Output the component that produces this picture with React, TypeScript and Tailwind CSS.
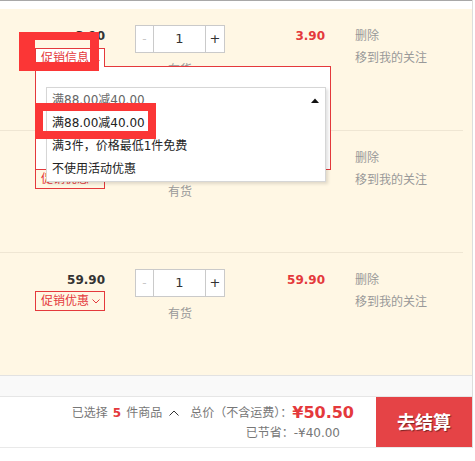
import React from "react";

function ChevronDown({ up = false }: { up?: boolean }) {
  return (
    <svg width="8" height="5" viewBox="0 0 8 5" className="shrink-0">
      {up ? (
        <polyline points="0.5,4.5 4,1 7.5,4.5" fill="none" stroke="#e4393c" strokeWidth="1" />
      ) : (
        <polyline points="0.5,0.5 4,4 7.5,0.5" fill="none" stroke="#e4393c" strokeWidth="1" />
      )}
    </svg>
  );
}

function Qty() {
  return (
    <div className="flex h-[28px] w-[90px] border border-[#cacaca] bg-white">
      <div className="flex w-[18px] items-center justify-center border-r border-[#cacaca] text-[12px] text-[#c8c8c8]">-</div>
      <div className="flex flex-1 items-center justify-center border-r border-[#cacaca] text-[13px] text-[#333]">1</div>
      <div className="flex w-[18px] items-center justify-center text-[13px] text-[#333]">+</div>
    </div>
  );
}

function PromoClosed() {
  return (
    <div className="mt-px flex h-5 w-[70px] items-center border border-[#e4393c] pl-[5px] pr-[3px] text-[12px] text-[#e4393c]">
      <span className="leading-none">促销优惠</span>
      <span className="ml-auto mr-[1px]">
        <ChevronDown />
      </span>
    </div>
  );
}

function PromoOpen() {
  return (
    <div className="relative mt-[2px] h-5 w-[70px]">
      <div className="absolute left-0 top-[18px] z-20 h-[104px] w-[296px] border border-[#e4393c] bg-white">
        <div className="absolute left-[10px] top-[20px] h-[95px] w-[280px] border border-[#d6d6d6] bg-white shadow-[2px_2px_3px_rgba(0,0,0,0.12)]">
          <div className="flex h-6 items-center pl-[5px] pr-[5px] text-[12px] text-[#666]">
            <span>满88.00减40.00</span>
            <svg width="8" height="5" viewBox="0 0 8 5" className="ml-auto mr-[1px]">
              <polygon points="0,5 4,0.5 8,5" fill="#111" />
            </svg>
          </div>
          <div className="h-[23px] pl-[5px] text-[12px] leading-[23px] text-[#222]">满88.00减40.00</div>
          <div className="h-[23px] pl-[5px] text-[12px] leading-[23px] text-[#222]">满3件，价格最低1件免费</div>
          <div className="h-[23px] pl-[5px] text-[12px] leading-[23px] text-[#222]">不使用活动优惠</div>
        </div>
      </div>
      <div className="relative z-30 flex h-[19px] w-[70px] items-center border-l border-r border-t border-[#e4393c] bg-white pl-[5px] pr-[3px] text-[12px] text-[#e4393c]">
        <span className="leading-none">促销信息</span>
        <span className="ml-auto mr-[1px]">
          <ChevronDown up />
        </span>
      </div>
    </div>
  );
}

function Row({ price, sum, open, last }: { price: string; sum: string; open?: boolean; last?: boolean }) {
  return (
    <div className={`mr-[9px] flex h-[122px] pt-4 ${last ? "" : "border-b border-[#efe6d3]"}`}>
      <div className="ml-[35px] flex w-[70px] flex-col items-end">
        <div className="mt-px h-5 text-[12px] font-bold leading-5 text-[#333]">{price}</div>
        {open ? <PromoOpen /> : <PromoClosed />}
      </div>
      <div className="ml-[30px] flex w-[90px] flex-col items-center">
        <Qty />
        <div className="mt-[7px] h-5 text-[12px] leading-5 text-[#999]">有货</div>
      </div>
      <div className="mt-px h-5 w-[100px] text-right text-[12px] font-bold leading-5 text-[#e4393c]">{sum}</div>
      <div className="ml-[30px] flex flex-col text-[12px] text-[#999]">
        <div className="mt-px h-5 leading-5">删除</div>
        <div className="mt-[2px] h-5 leading-5">移到我的关注</div>
      </div>
    </div>
  );
}

export default function App() {
  return (
    <div className="relative h-[461px] w-[475px] overflow-hidden bg-white font-['DejaVu_Sans','Noto_Sans_CJK_SC',sans-serif] text-[12px] text-[#333]">
      <div className="w-[473px] border-r border-[#dddddd]">
        <div className="h-px bg-[#a8a8a8]" />
        <div className="h-2" />
        <div className="border-b border-[#e2e2e2] bg-[#fff7e4]">
          <Row price="3.90" sum="3.90" open />
          <Row price="19.90" sum="19.90" />
          <Row price="59.90" sum="59.90" last />
        </div>
        <div className="h-[21px] border-b border-[#e6e6e6] bg-[#f9f9f9]" />
        <div className="flex h-[51px] border-b border-[#e9e9e9] bg-white">
          <div className="flex flex-1 flex-col items-end pr-[22px] pt-[6px]">
            <div className="flex h-5 items-center leading-5 text-[#777]">
              <span>已选择</span>
              <span className="mx-[5px] font-bold text-[#e4393c]">5</span>
              <span>件商品</span>
              <svg width="10" height="6" viewBox="0 0 10 6" className="ml-[7px]">
                <polyline points="0.5,5.5 5,1 9.5,5.5" fill="none" stroke="#333" strokeWidth="1" />
              </svg>
              <span className="ml-[11px]">总价（不含运费）：</span>
              <span className="text-[16px] font-bold text-[#e4393c]">¥50.50</span>
            </div>
            <div className="mr-[14px] h-5 leading-5 text-[#777]">已节省：-¥40.00</div>
          </div>
          <div className="flex w-[96px] items-center justify-center bg-[#e54346] text-[18px] font-bold text-white [text-shadow:1px_1px_1px_rgba(0,0,0,0.45)]">
            去结算
          </div>
        </div>
      </div>
      <div className="absolute left-[19px] top-[32px] z-50 h-[39px] w-[80px] border-b-[9px] border-l-[16px] border-r-[9px] border-t-[8px] border-[#fb3636]" />
      <div className="absolute left-[35px] top-[103px] z-50 h-[36px] w-[121px] border-[8px] border-[#fb3636]" />
    </div>
  );
}
